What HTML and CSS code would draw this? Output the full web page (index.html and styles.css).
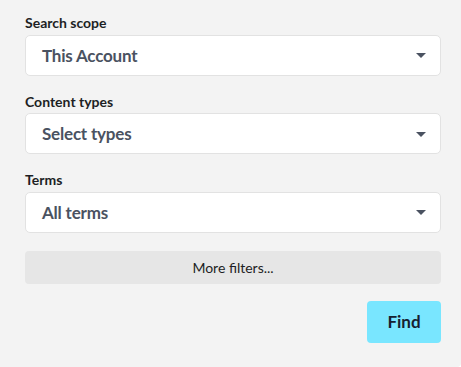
FILE: index.html
```html
<!DOCTYPE html>
<html>
<head>
<meta charset="utf-8">
<link rel="stylesheet" href="styles.css">
</head>
<body>
<div class="panel">
  <div class="field">
    <label class="label">Search scope</label>
    <div class="select"><span class="value">This Account</span><span class="caret"></span></div>
  </div>
  <div class="field">
    <label class="label">Content types</label>
    <div class="select"><span class="value">Select types</span><span class="caret"></span></div>
  </div>
  <div class="field">
    <label class="label">Terms</label>
    <div class="select"><span class="value">All terms</span><span class="caret"></span></div>
  </div>
  <button class="more">More filters...</button>
  <div class="actions">
    <button class="find">Find</button>
  </div>
</div>
</body>
</html>
```
FILE: styles.css
```css
html, body {
  margin: 0;
  padding: 0;
  background: #ffffff;
}
body {
  font-family: Lato, "Noto Sans", sans-serif;
}
.panel {
  width: 461px;
  height: 367px;
  box-sizing: border-box;
  background: #f3f3f3;
  border-radius: 0 0 4px 0;
  padding: 13px 20px 0 25px;
  display: flex;
  flex-direction: column;
}
.field {
  display: flex;
  flex-direction: column;
  margin-bottom: 16px;
}
.label {
  font-size: 14px;
  font-weight: 700;
  line-height: 20px;
  padding-bottom: 1.5px;
  color: #1d1f24;
}
.select {
  height: 41px;
  box-sizing: border-box;
  background: #fff;
  border: 1px solid #e2e2e2;
  border-radius: 5px;
  display: flex;
  align-items: center;
  justify-content: space-between;
  padding: 0 14px 0 16px;
}
.value {
  font-size: 17px;
  font-weight: 700;
  letter-spacing: -0.2px;
  color: #4a5261;
}
.caret {
  width: 0;
  height: 0;
  border-left: 5.5px solid transparent;
  border-right: 5.5px solid transparent;
  border-top: 5px solid #4a5261;
  margin-top: 1px;
}
.more {
  margin-top: 2px;
  height: 33px;
  border: none;
  border-radius: 4px;
  background: #e6e6e6;
  font-family: Lato, "Noto Sans", sans-serif;
  font-size: 14px;
  color: #1d1f24;
  padding: 0;
}
.actions {
  display: flex;
  justify-content: flex-end;
  margin-top: 17px;
}
.find {
  width: 74px;
  height: 42px;
  border: none;
  border-radius: 4px;
  background: #79e6ff;
  font-family: Lato, "Noto Sans", sans-serif;
  font-size: 17px;
  font-weight: 700;
  color: #162030;
  padding: 0;
}
```
